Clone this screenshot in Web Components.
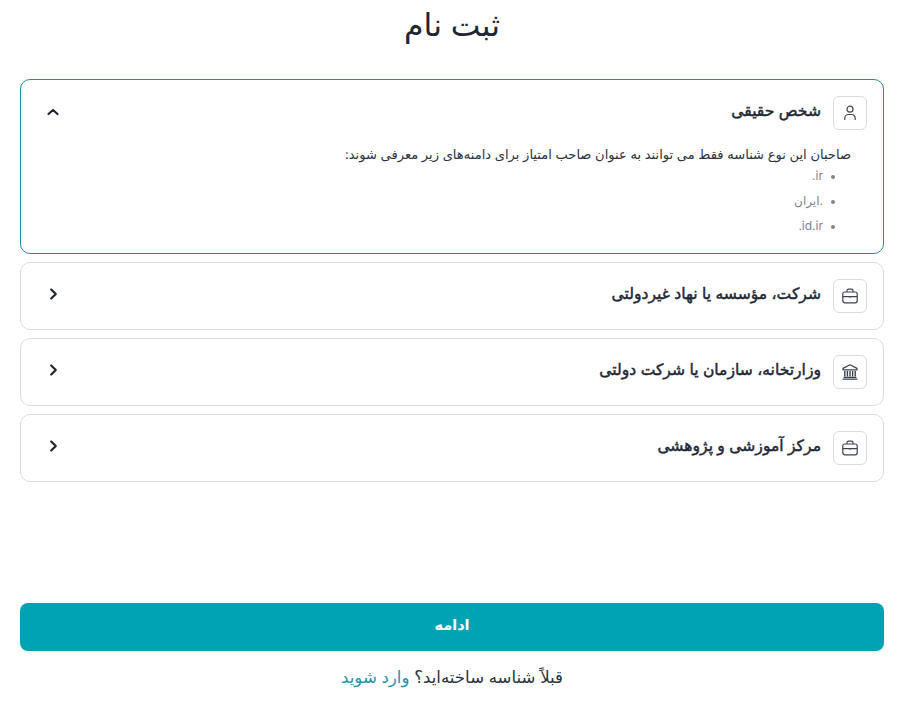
<!DOCTYPE html>
<html lang="fa" dir="rtl">
<head>
<meta charset="utf-8">
<title>ثبت نام</title>
<style>
  html, body { margin: 0; background: #fff; }
  body { font-family: Inter, "DejaVu Sans", sans-serif; color: #1e2633; }
</style>
</head>
<body>
<template id="signup-page-tpl">
  <style>
    :host { display: flex; flex-direction: column; height: 701px; box-sizing: border-box; padding: 0 21px 0 20px; }
    h1 { margin: 0; height: 79px; padding-top: 6px; box-sizing: border-box; font-size: 31.5px; line-height: 38px; font-weight: 400; text-align: center; color: #1e2633; }
    .list { display: flex; flex-direction: column; gap: 8px; }
    .grow { flex: 1; }
    .foot { display: flex; flex-direction: column; }
  </style>
  <h1><slot name="title"></slot></h1>
  <div class="list"><slot></slot></div>
  <div class="grow"></div>
  <div class="foot"><slot name="foot"></slot></div>
</template>

<template id="type-card-tpl">
  <style>
    :host { display: block; box-sizing: border-box; border: 1px solid #d9dce1; border-radius: 10px; background: #fff; }
    :host([open]) { border-color: #1b8ea3; }
    .head { display: flex; align-items: center; height: 66px; padding: 0 16px; gap: 12px; }
    .box { width: 34px; height: 34px; box-sizing: border-box; border: 1px solid #d9dce1; border-radius: 6px; display: flex; align-items: center; justify-content: center; flex: none; color: #3c4350; }
    .name { flex: 1; padding-bottom: 5px; font-size: 15.6px; font-weight: 400; -webkit-text-stroke: 0.45px #1e2633; color: #1e2633; }
    .chev { width: 16px; height: 16px; margin: 0 0 4px 8px; flex: none; color: #1e2633; }
    :host([open]) .chev { margin-bottom: 2px; }
    .chev svg { display: block; }
    .body { display: none; padding: 0 32px 12px 32px; }
    :host([open]) .body { display: block; }
  </style>
  <div class="head">
    <div class="box"><slot name="icon"></slot></div>
    <div class="name"><slot name="name"></slot></div>
    <div class="chev"></div>
  </div>
  <div class="body"><slot></slot></div>
</template>

<template id="domain-list-tpl">
  <style>
    :host { display: block; font-size: 13.05px; color: #2b3240; }
    p { margin: 0; line-height: 17px; height: 20px; }
    ul { margin: 0; padding: 0 16px 0 0; list-style: none; color: #7d8390; }
    ::slotted(li) { display: flex; align-items: center; gap: 8px; height: 20px; line-height: 20px; margin-bottom: 5px; font-size: 12px; }
    ::slotted(li)::before { content: ""; width: 4px; height: 4px; margin-top: 2px; border-radius: 50%; background: #7d8390; flex: none; }
  </style>
  <p><slot name="lead"></slot></p>
  <ul><slot></slot></ul>
</template>

<template id="submit-row-tpl">
  <style>
    :host { display: block; padding-bottom: 14px; }
    button { display: block; width: 100%; height: 48px; padding: 0 0 6px; border: 0; border-radius: 8px; background: #00a3b4; color: #fff; font: 700 14.5px Inter, "DejaVu Sans", sans-serif; }
    p { margin: 16px 0 0; height: 20px; line-height: 20px; text-align: center; font-size: 16.6px; color: #2b3240; }
    ::slotted(a) { color: #1f93a8; text-decoration: none; }
  </style>
  <button><slot name="label"></slot></button>
  <p><slot></slot></p>
</template>

<signup-page>
  <span slot="title">ثبت نام</span>

  <type-card open>
    <svg slot="icon" width="18" height="18" viewBox="0 0 18 18" fill="none" stroke="currentColor" stroke-width="1.2" stroke-linecap="round"><circle cx="9" cy="5.2" r="3"/><path d="M3.8 15.5v-1.4a3.6 3.6 0 0 1 3.6-3.6h3.2a3.6 3.6 0 0 1 3.6 3.6v1.4"/></svg>
    <span slot="name">شخص حقیقی</span>
    <domain-list>
      <span slot="lead">صاحبان این نوع شناسه فقط می توانند به عنوان صاحب امتیاز برای دامنه‌های زیر معرفی شوند:</span>
      <li><bdi dir="ltr">.ir</bdi></li>
      <li><span>.ایران</span></li>
      <li><bdi dir="ltr">.id.ir</bdi></li>
    </domain-list>
  </type-card>

  <type-card>
    <svg slot="icon" width="18" height="18" viewBox="0 0 18 18" fill="none" stroke="currentColor" stroke-width="1.2" stroke-linejoin="round"><rect x="1.8" y="5" width="14.4" height="10.8" rx="2"/><path d="M6 5V3.6A1.4 1.4 0 0 1 7.4 2.2h3.2A1.4 1.4 0 0 1 12 3.6V5M1.8 9.6h14.4"/><path d="M9 9v1.6" stroke-width="1.6"/></svg>
    <span slot="name">شرکت، مؤسسه یا نهاد غیردولتی</span>
  </type-card>

  <type-card>
    <svg slot="icon" width="18" height="18" viewBox="0 0 18 18" fill="none" stroke="currentColor" stroke-width="1.2" stroke-linejoin="round"><path d="M9 1.8 2 5.4v1.4h14V5.4z"/><path d="M3.8 8v5.4M6.4 8v5.4M9 8v5.4M11.6 8v5.4M14.2 8v5.4" stroke-width="1.4"/><path d="M2.6 14.4h12.8M1.6 16.2h14.8" stroke-width="1.3"/></svg>
    <span slot="name">وزارتخانه، سازمان یا شرکت دولتی</span>
  </type-card>

  <type-card>
    <svg slot="icon" width="18" height="18" viewBox="0 0 18 18" fill="none" stroke="currentColor" stroke-width="1.2" stroke-linejoin="round"><rect x="1.8" y="5" width="14.4" height="10.8" rx="2"/><path d="M6 5V3.6A1.4 1.4 0 0 1 7.4 2.2h3.2A1.4 1.4 0 0 1 12 3.6V5M1.8 9.6h14.4"/><path d="M9 9v1.6" stroke-width="1.6"/></svg>
    <span slot="name">مرکز آموزشی و پژوهشی</span>
  </type-card>

  <submit-row slot="foot">
    <span slot="label">ادامه</span>
    قبلاً شناسه ساخته‌اید؟ <a href="#">وارد شوید</a>
  </submit-row>
</signup-page>

<script>
function defineFrom(tag, tplId, extra) {
  class El extends HTMLElement {
    constructor() {
      super();
      this.attachShadow({ mode: "open" });
      this.shadowRoot.appendChild(document.getElementById(tplId).content.cloneNode(true));
      if (extra) extra(this);
    }
  }
  customElements.define(tag, El);
}

defineFrom("signup-page", "signup-page-tpl");
defineFrom("domain-list", "domain-list-tpl");
defineFrom("submit-row", "submit-row-tpl");

const CHEV_SIDE = '<svg width="16" height="16" viewBox="0 0 16 16" fill="none" stroke="currentColor" stroke-width="2.2" stroke-linecap="round" stroke-linejoin="round"><path d="M6.2 3.5 10.8 8l-4.6 4.5"/></svg>';
const CHEV_UP = '<svg width="16" height="16" viewBox="0 0 16 16" fill="none" stroke="currentColor" stroke-width="2.2" stroke-linecap="round" stroke-linejoin="round"><path d="M3.5 10 8 6l4.5 4"/></svg>';

defineFrom("type-card", "type-card-tpl", (el) => {
  el.shadowRoot.querySelector(".chev").innerHTML = el.hasAttribute("open") ? CHEV_UP : CHEV_SIDE;
});
</script>
</body>
</html>
